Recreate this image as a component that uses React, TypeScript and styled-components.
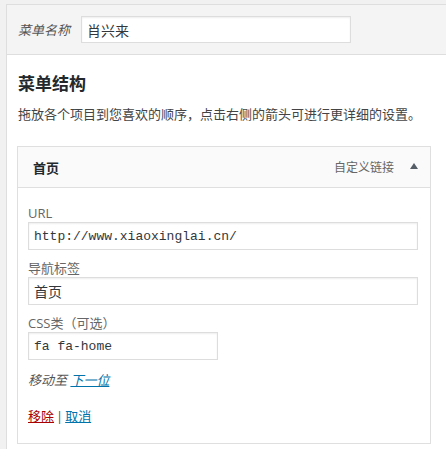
import React from "react";
import styled, { createGlobalStyle } from "styled-components";

const GlobalStyle = createGlobalStyle`
  html, body {
    margin: 0;
    padding: 0;
    background: #f1f1f1;
    overflow: hidden;
  }
  body {
    font-family: "Open Sans", "Noto Sans CJK SC", sans-serif;
    font-size: 13px;
    color: #444;
  }
`;

const App = () => {
    return (
        <>
            <GlobalStyle/>
            <Frame>
                <Panel>
                    <PanelHeader>
                        <NameLabel>菜单名称</NameLabel>
                        <TextInput defaultValue="肖兴来" width={270} height={27}/>
                    </PanelHeader>
                    <PanelBody>
                        <Heading>菜单结构</Heading>
                        <Hint>拖放各个项目到您喜欢的顺序，点击右侧的箭头可进行更详细的设置。</Hint>
                        <MenuItem>
                            <ItemBar>
                                <ItemTitle>首页</ItemTitle>
                                <ItemControls>
                                    <ItemType>自定义链接</ItemType>
                                    <Arrow viewBox="0 0 8 6">
                                        <polygon points="4,0 8,6 0,6" fill="#555d66"/>
                                    </Arrow>
                                </ItemControls>
                            </ItemBar>
                            <ItemSettings>
                                <Field>
                                    <FieldLabel>URL</FieldLabel>
                                    <TextInput defaultValue="http://www.xiaoxinglai.cn/" mono/>
                                </Field>
                                <Field>
                                    <FieldLabel>导航标签</FieldLabel>
                                    <TextInput defaultValue="首页"/>
                                </Field>
                                <Field>
                                    <FieldLabel>CSS类（可选）</FieldLabel>
                                    <TextInput defaultValue="fa fa-home" mono width={190}/>
                                </Field>
                                <MoveRow>
                                    移动至 <LinkText href="#">下一位</LinkText>
                                </MoveRow>
                                <Actions>
                                    <DeleteLink href="#">移除</DeleteLink>
                                    <Sep>|</Sep>
                                    <LinkText href="#">取消</LinkText>
                                </Actions>
                            </ItemSettings>
                        </MenuItem>
                    </PanelBody>
                </Panel>
            </Frame>
        </>
    )
};
export default App;

const Frame = styled.div`
    padding: 4px 0 0 6px;
    height: 445px;
`;
const Panel = styled.div`
    width: 460px;
    height: 100%;
    border-left: 1px solid #dedede;
    border-top: 1px solid #dedede;
    background: #fff;
`;
const PanelHeader = styled.div`
    display: flex;
    align-items: center;
    gap: 11px;
    height: 50px;
    padding: 0 0 0 11px;
    background: #f4f4f4;
    border-bottom: 1px solid #dedede;
    box-sizing: border-box;
`;
const NameLabel = styled.span`
    font-style: italic;
    color: #555;
`;
const TextInput = styled.input<{ mono?: boolean; width?: number; height?: number }>`
    display: block;
    box-sizing: border-box;
    width: ${p => p.width ? p.width + "px" : "100%"};
    height: ${p => p.height ? p.height : 28}px;
    margin: 0;
    padding: 0 5px;
    border: 1px solid #ddd;
    box-shadow: inset 0 1px 2px rgba(0, 0, 0, 0.07);
    background: #fff;
    color: #32373c;
    font-family: ${p => p.mono ? '"Liberation Mono", "Noto Sans CJK SC", monospace' : '"Open Sans", "Noto Sans CJK SC", sans-serif'};
    font-size: ${p => p.mono ? "13px" : "14px"};
    outline: none;
`;
const PanelBody = styled.div`
    padding: 0 0 0 10px;
    width: 414px;
`;
const Heading = styled.h3`
    margin: 17px 0 0 1px;
    font-size: 17px;
    line-height: 24px;
    font-weight: 700;
    color: #23282d;
`;
const Hint = styled.p`
    margin: 9px 0 0 1px;
    line-height: 18px;
    color: #444;
`;
const MenuItem = styled.div`
    margin-top: 23px;
    border: 1px solid #dfdfdf;
`;
const ItemBar = styled.div`
    display: flex;
    align-items: center;
    justify-content: space-between;
    height: 40px;
    padding: 0 12px 0 15px;
    background: #fafafa;
    border-bottom: 1px solid #dfdfdf;
`;
const ItemTitle = styled.span`
    font-weight: 700;
    color: #23282d;
`;
const ItemControls = styled.div`
    display: flex;
    align-items: center;
    gap: 16px;
`;
const ItemType = styled.span`
    font-size: 12px;
    color: #666;
`;
const Arrow = styled.svg`
    width: 8px;
    height: 6px;
    margin-bottom: 2px;
`;
const ItemSettings = styled.div`
    padding: 17px 12px 18px 10px;
`;
const Field = styled.div`
    margin-bottom: 10px;
`;
const FieldLabel = styled.div`
    line-height: 17px;
    color: #666;
`;
const MoveRow = styled.div`
    margin-top: 11px;
    line-height: 18px;
    font-style: italic;
    color: #555;
`;
const LinkText = styled.a`
    color: #0073aa;
    text-decoration: underline;
`;
const DeleteLink = styled.a`
    color: #a00;
    text-decoration: underline;
`;
const Sep = styled.span`
    color: #555;
    margin: 0 2px;
`;
const Actions = styled.div`
    margin-top: 18px;
    line-height: 18px;
`;
